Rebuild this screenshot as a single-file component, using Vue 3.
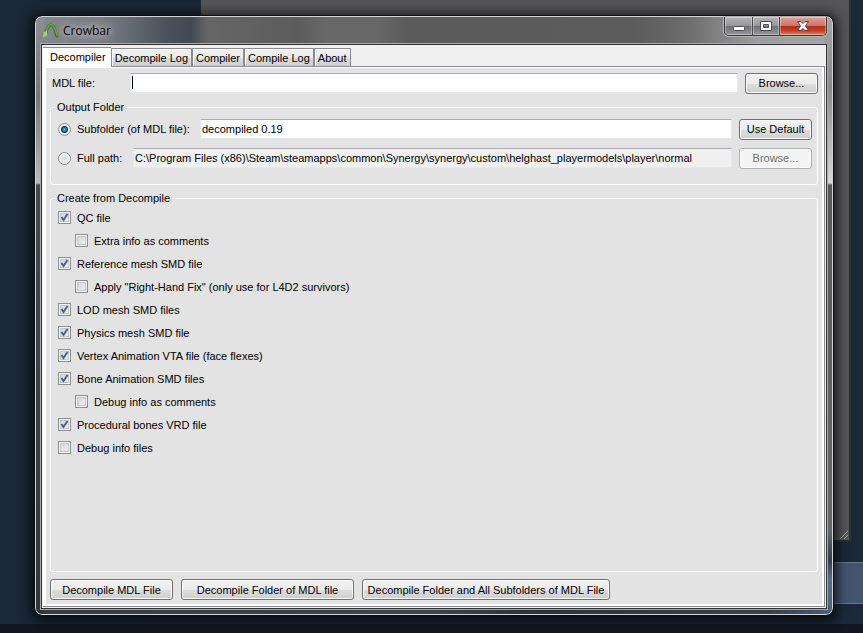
<script setup>
import { ref } from 'vue'

const tabs = ['Decompiler', 'Decompile Log', 'Compiler', 'Compile Log', 'About']
const active = ref('Decompiler')
const mdlFile = ref('')
const outputMode = ref('subfolder')
const subfolder = ref('decompiled 0.19')
const fullPath = ref('C:\\Program Files (x86)\\Steam\\steamapps\\common\\Synergy\\synergy\\custom\\helghast_playermodels\\player\\normal')
const options = ref([
  { label: 'QC file', checked: true },
  { label: 'Extra info as comments', checked: false, nested: true },
  { label: 'Reference mesh SMD file', checked: true },
  { label: 'Apply "Right-Hand Fix" (only use for L4D2 survivors)', checked: false, nested: true },
  { label: 'LOD mesh SMD files', checked: true },
  { label: 'Physics mesh SMD file', checked: true },
  { label: 'Vertex Animation VTA file (face flexes)', checked: true },
  { label: 'Bone Animation SMD files', checked: true },
  { label: 'Debug info as comments', checked: false, nested: true },
  { label: 'Procedural bones VRD file', checked: true },
  { label: 'Debug info files', checked: false },
])
</script>

<template>
  <div class="desktop">
    <div class="back-window">
      <svg class="grip" viewBox="0 0 8 8" aria-hidden="true">
        <path d="M0 8L8 0M4 8L8 4" stroke="#aaa" fill="none" />
      </svg>
    </div>
    <div class="back-bar"></div>
    <div class="taskbar"></div>

    <main class="window">
      <header class="titlebar">
        <svg class="logo" viewBox="0 0 18 18" aria-hidden="true">
          <path d="M4 11C5 6 6.500 3 9 3C12.500 3 13 10 15.500 15.500" fill="none" stroke="#3f7426" stroke-width="3" />
          <path d="M4 10.500C5.500 5.500 6.500 2.500 9 2.500C12 2.500 13.500 9 15.500 14" fill="none" stroke="#68a53e" stroke-width="1.500" />
          <path d="M1 15.500L1.500 10.500L5 8.500L5 13.500Z" fill="#9fd47a" />
        </svg>
        <h1>Crowbar</h1>
        <div class="caption">
          <button type="button" class="cap min" aria-label="Minimize">
            <svg viewBox="0 0 14 12"><rect x="1.500" y="6.500" width="11" height="4" rx="1" fill="#fff" stroke="#4a4c5c" /></svg>
          </button>
          <button type="button" class="cap max" aria-label="Maximize">
            <svg viewBox="0 0 14 12"><path d="M1.500 1.500H12.500V10.500H1.500ZM4.500 4.500V7.500H9.500V4.500Z" fill="#fff" fill-rule="evenodd" stroke="#4a4c5c" /></svg>
          </button>
          <button type="button" class="cap close" aria-label="Close">
            <svg viewBox="0 0 14 12"><path d="M1.500 1.500H5L7 3.500L9 1.500H12.500L9.500 6L12.500 10.500H9L7 8.500L5 10.500H1.500L4.500 6Z" fill="#fff" stroke="#54445a" /></svg>
          </button>
        </div>
      </header>

      <div class="client">
        <nav class="tabs" role="tablist">
          <button
            v-for="tab in tabs"
            :key="tab"
            type="button"
            role="tab"
            class="tab"
            :class="{ active: tab === active }"
            :aria-selected="tab === active"
            @click="active = tab"
          >{{ tab }}</button>
        </nav>

        <div class="sheet">
          <div class="page">
            <div class="row mdl">
              <label for="mdl">MDL file:</label>
              <input id="mdl" v-model="mdlFile" class="text" type="text" />
              <span class="caret"></span>
              <button type="button" class="btn side">Browse...</button>
            </div>

            <fieldset class="group output">
              <legend>Output Folder</legend>
              <div class="row">
                <input id="sub" v-model="outputMode" class="radio" type="radio" name="mode" value="subfolder" />
                <label for="sub" class="sub-label">Subfolder (of MDL file):</label>
                <input v-model="subfolder" class="text" type="text" aria-label="Subfolder name" />
                <button type="button" class="btn side">Use Default</button>
              </div>
              <div class="row">
                <input id="full" v-model="outputMode" class="radio" type="radio" name="mode" value="full" />
                <label for="full" class="full-label">Full path:</label>
                <input v-model="fullPath" class="text" type="text" readonly aria-label="Full path value" />
                <button type="button" class="btn side" disabled>Browse...</button>
              </div>
            </fieldset>

            <fieldset class="group create">
              <legend>Create from Decompile</legend>
              <label v-for="(o, i) in options" :key="i" class="option" :class="{ nested: o.nested }">
                <input v-model="o.checked" class="check" type="checkbox" />
                <svg v-if="o.checked" class="tick" viewBox="0 0 9 9" aria-hidden="true">
                  <path d="M1.500 4L3.500 7L7.500 1" fill="none" stroke="#4a5f97" stroke-width="2" />
                </svg>
                <span>{{ o.label }}</span>
              </label>
            </fieldset>

            <footer class="actions">
              <button type="button" class="btn one">Decompile MDL File</button>
              <button type="button" class="btn two">Decompile Folder of MDL file</button>
              <button type="button" class="btn three">Decompile Folder and All Subfolders of MDL File</button>
            </footer>
          </div>
        </div>
      </div>
    </main>
  </div>
</template>

<style>
body {
  margin: 0;
  background: #1b2838;
}
</style>

<style scoped>
* {
  box-sizing: border-box;
}
.desktop {
  position: relative;
  display: flex;
  min-height: 100vh;
  padding: 16px 30px 18px 35px;
  overflow: hidden;
  background: #1b2838;
  color: #000;
  font: 11px/14px 'Liberation Sans', sans-serif;
}
.back-window {
  position: absolute;
  top: 0;
  right: 12px;
  bottom: 91px;
  left: 201px;
  border: solid #303030;
  border-width: 0 2px 2px 0;
  background: #555557;
}
.grip {
  position: absolute;
  right: 1px;
  bottom: 1px;
  width: 8px;
  height: 8px;
}
.back-bar {
  position: absolute;
  right: 0;
  bottom: 29px;
  width: 200px;
  height: 42px;
  border: solid #64799a;
  border-width: 1px 0;
  background: #43546f;
}
.taskbar {
  position: absolute;
  right: 0;
  bottom: 0;
  left: 0;
  height: 9px;
  background: #101821;
}
.window {
  position: relative;
  display: flex;
  flex: 1;
  flex-direction: column;
  min-width: 0;
  padding: 0 5px 5px;
  border: 1px solid #d4d6d8;
  border-radius: 7px;
  outline: 1px solid #0c0e11;
  background:
    linear-gradient(#8b8e92, #777 80px, #b9b9b9 166px, #424a50 168px, #2c3740) left / 8px 100% no-repeat,
    linear-gradient(#a5a5a5, #8a8a8a 70px, #d8d8d8 166px, #5a5a5a 168px, #686868 86%, #333f4d 91%, #5b6d89 94%, #4e5f78) right / 8px 100% no-repeat,
    linear-gradient(90deg, #333c48, #3a464c 50%, #29333e 62%, #36424c 92%, #4a5b73) bottom / 100% 8px no-repeat,
    linear-gradient(90deg, #858a90, #767b82 70px, #4c525b 130px, #424954 155px, #666 172px, #5c5c5c 260px, #686868 290px, #686868 340px, #5b5b5b 370px, #5c5c5c 600px, #6c6c6c 650px, #9c9c9c 720px, #a5a5a5);
  box-shadow: 0 2px 12px 4px rgba(0, 0, 0, 0.75);
}
.titlebar {
  display: flex;
  align-items: flex-start;
  height: 27px;
  padding-left: 1px;
}
.logo {
  width: 18px;
  height: 18px;
  margin-top: 5px;
}
h1 {
  margin: 0 0 0 3px;
  padding: 6px 8px 0 0;
  color: #000;
  font: 12px/15px 'Open Sans', sans-serif;
  text-shadow: 0 0 6px #ccc, 0 0 10px #bbb, 0 0 12px #aaa;
}
.caption {
  display: flex;
  margin-left: auto;
  border: 1px solid #3c3c3e;
  border-top: 0;
  border-radius: 0 0 5px 5px;
  box-shadow: 0 0 0 1px #b2b2b2;
  overflow: hidden;
}
.cap {
  display: grid;
  place-items: center;
  width: 27px;
  height: 18px;
  padding: 0;
  border: 0;
  border-right: 1px solid #4a4a4c;
  background: linear-gradient(#b5b5b8, #97979a 48%, #6d6d73 50%, #96969c);
  box-shadow: inset 0 0 0 1px rgba(255, 255, 255, 0.35);
}
.cap svg {
  width: 14px;
  height: 12px;
}
.cap.min {
  width: 28px;
}
.cap.close {
  width: 46px;
  border-right: 0;
  background: linear-gradient(#dfa195, #cf7465 48%, #b52b15 50%, #c63c24 75%, #dc8468);
}
.client {
  display: flex;
  flex: 1;
  flex-direction: column;
  padding: 2px 1px 1px;
  border: 1px solid #303236;
  outline: 1px solid #a7a9ab;
  background: #f0f0f0;
}
.tabs {
  position: relative;
  display: flex;
  align-items: flex-end;
  height: 19px;
}
.tab {
  height: 18px;
  padding: 1px 3px 0;
  border: 1px solid #898c95;
  border-bottom-width: 0;
  background: linear-gradient(#f2f2f2, #ebebeb 50%, #dcdcdc 51%, #cfcfcf);
  box-shadow: inset 1px 1px #fcfcfc;
  color: #000;
  font: inherit;
  white-space: nowrap;
}
.tab.active {
  height: 20px;
  margin-bottom: -1px;
  padding: 0 5px 2px 7px;
  border-width: 1px 0 0;
  background: #fff;
}
.sheet {
  display: flex;
  flex: 1;
  padding: 1px 2px 2px 3px;
  border: 1px solid #898c95;
  border-left: 0;
  background: #fff;
}
.page {
  display: flex;
  flex: 1;
  flex-direction: column;
  min-width: 0;
  padding: 4px;
  background: #e3e3e3;
}
.row {
  position: relative;
  display: flex;
  align-items: center;
  height: 22px;
}
.mdl label {
  width: 80px;
  padding-left: 2px;
}
.text {
  flex: 1;
  min-width: 0;
  height: 20px;
  padding: 0 1px;
  border: 1px solid #e3e9ef;
  border-top-color: #abadb3;
  background: #fff;
  color: #000;
  font: inherit;
}
.text:read-only {
  background: #f0f0f0;
}
.caret {
  position: absolute;
  top: 4px;
  left: 82px;
  width: 1px;
  height: 13px;
  background: #000;
}
.btn {
  height: 21px;
  padding: 0;
  border: 1px solid #707070;
  border-radius: 3px;
  background: linear-gradient(#f2f2f2, #ebebeb 50%, #dddddd 51%, #cfcfcf);
  box-shadow: inset 0 0 0 1px #fafafa;
  color: #000;
  font: inherit;
  white-space: nowrap;
}
.btn:disabled {
  border-color: #adb2b5;
  background: #f4f4f4;
  color: #707070;
}
.side {
  width: 73px;
  margin-left: 7px;
}
.group {
  min-width: 0;
  margin: 0;
  padding: 0 5px 0 7px;
  border: 1px solid #fff;
  border-radius: 3px;
  box-shadow: inset 1px 1px #d5dfe5;
}
.group legend {
  padding: 0 2px;
  margin-left: -3px;
}
.output {
  height: 85px;
  margin-top: 6px;
}
.output .row {
  margin-top: 4px;
  margin-bottom: 7px;
}
.radio {
  width: 13px;
  height: 13px;
  margin: 0 6px 0 0;
  appearance: none;
  border: 1px solid #8e8f8f;
  border-radius: 50%;
  background: radial-gradient(circle, #d0d4d8, #f4f4f4 65%);
}
.radio:checked {
  background: radial-gradient(circle at 50% 50%, #5cc6ea 0, #17759d 2px, #0e2f48 3px, #e8ecef 4px);
}
.sub-label {
  width: 123px;
}
.full-label {
  width: 56px;
}
.create {
  flex: 1;
  margin-top: 6px;
}
.create legend {
  margin-bottom: 1px;
}
.option {
  position: relative;
  display: flex;
  align-items: center;
  width: max-content;
  height: 23px;
}
.option.nested {
  margin-left: 17px;
}
.check {
  width: 13px;
  height: 13px;
  margin: 0 6px 0 0;
  appearance: none;
  border: 1px solid #8e8f8f;
  background: linear-gradient(135deg, #cbcfd5, #f6f6f6);
  box-shadow: inset 0 0 0 1px #f4f4f4, inset 0 0 0 2px #c4c8cd;
}
.tick {
  position: absolute;
  top: 7px;
  left: 2px;
  width: 9px;
  height: 9px;
  pointer-events: none;
}
.actions {
  display: flex;
  gap: 8px;
  padding-top: 7px;
}
.one {
  width: 123px;
}
.two {
  width: 173px;
}
.three {
  width: 248px;
}
</style>
